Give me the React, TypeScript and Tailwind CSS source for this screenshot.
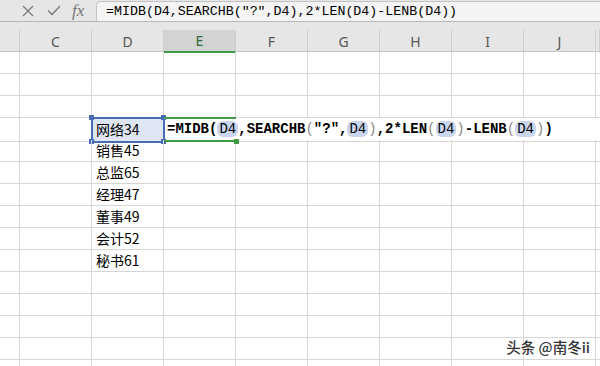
import React from 'react';

const cols = ['B', 'C', 'D', 'E', 'F', 'G', 'H', 'I', 'J', 'K'];

const dValues: Record<number, string> = {
  4: '网络34',
  5: '销售45',
  6: '总监65',
  7: '经理47',
  8: '董事49',
  9: '会计52',
  10: '秘书61',
};

const rowNumbers = Array.from({ length: 15 }, (_, i) => i + 1);

function Ref() {
  return <span className="bg-[#c9d5ee] rounded-[6px] px-[2px] font-normal">D4</span>;
}

function P({ c }: { c: string }) {
  return <span className="text-[#8a8a8a] font-normal">{c}</span>;
}

function Handle({ pos, color }: { pos: string; color: string }) {
  return <div className={`absolute w-[5px] h-[5px] ${pos} ${color}`} />;
}

function CellFormula() {
  return (
    <span className="whitespace-nowrap font-['Liberation_Mono',monospace] font-bold text-[14px] text-black">
      =MIDB(
      <Ref />
      ,SEARCHB<P c="(" />"?",
      <Ref />
      <P c=")" />
      ,2*LEN<P c="(" />
      <Ref />
      <P c=")" />
      -LENB<P c="(" />
      <Ref />
      <P c=")" />)
    </span>
  );
}

export default function App() {
  return (
    <div className="w-[600px] h-[366px] overflow-hidden bg-white relative font-['Noto_Sans','Noto_Sans_CJK_SC',sans-serif]">
      {/* Formula bar */}
      <div className="h-[22px] bg-[#e6e6e6] flex border-b border-[#b8b8b8]">
        <div className="w-[96px] flex items-center">
          <svg className="ml-[22px]" width="12" height="12" viewBox="0 0 12 12">
            <path d="M1 1 L11 11 M11 1 L1 11" stroke="#777" strokeWidth="1.2" fill="none" />
          </svg>
          <svg className="ml-[13px]" width="14" height="11" viewBox="0 0 14 11">
            <path d="M1 5.5 L5 9.5 L13 1" stroke="#777" strokeWidth="1.3" fill="none" />
          </svg>
          <span className="ml-[11px] font-['Liberation_Serif',serif] italic text-[17px] leading-none text-[#777]">fx</span>
        </div>
        <div className="flex-1 mt-[1px] bg-[#f4f4f4] border-l border-t border-[#c2c2c2] rounded-tl-[5px] flex items-center pl-[9px]">
          <span className="whitespace-nowrap font-['Liberation_Mono',monospace] text-[13.3px] text-black">
            =MIDB(D4,SEARCHB("?",D4),2*LEN(D4)-LENB(D4))
          </span>
        </div>
      </div>
      <div className="h-[8px] bg-[#e6e6e6]" />

      {/* Column headers */}
      <div className="grid grid-cols-[20px_repeat(8,72px)_1fr] h-[22px] bg-[#e6e6e6] border-b border-[#c4c4c4]">
        {cols.map((c) => (
          <div
            key={c}
            className={
              c === 'E'
                ? 'flex items-center justify-center border-r border-[#cfcfcf] bg-[#d3d3d3] border-b-2 border-b-[#3f9b45] text-[14px] text-[#2f6a36]'
                : 'flex items-center justify-center border-r border-[#cfcfcf] text-[14px] text-[#555]'
            }
          >
            {c === 'B' || c === 'K' ? '' : c}
          </div>
        ))}
      </div>

      {/* Grid rows */}
      {rowNumbers.map((r) => (
        <div key={r} className="grid grid-cols-[20px_repeat(8,72px)_1fr] h-[22px]">
          {cols.map((c) => {
            const spill = r === 4 && ['E', 'F', 'G', 'H', 'I', 'J'].includes(c);
            const base = `border-b border-[#d6d6d6] ${spill ? '' : 'border-r'} flex items-center relative`;
            if (c === 'D' && r === 4) {
              return (
                <div
                  key={c}
                  className={`${base} bg-[#dfe6f3] pl-[4px] text-[14px] text-black font-['Noto_Sans_CJK_SC',sans-serif] outline-2 outline-[#4a6cb6] -outline-offset-1`}
                >
                  网络34
                  <Handle pos="-top-[3px] -left-[3px]" color="bg-[#4a6cb6]" />
                  <Handle pos="-top-[3px] -right-[3px]" color="bg-[#4a6cb6]" />
                  <Handle pos="-bottom-[3px] -left-[3px]" color="bg-[#4a6cb6]" />
                  <Handle pos="-bottom-[3px] -right-[3px]" color="bg-[#4a6cb6]" />
                </div>
              );
            }
            if (c === 'E' && r === 4) {
              return (
                <div key={c} className="-mt-[1px] border-y-2 border-[#3f9b45] flex items-center relative pl-[3px] z-10">
                  <CellFormula />
                  <Handle pos="-bottom-[4px] -right-[3px]" color="bg-[#3f9b45]" />
                </div>
              );
            }
            return (
              <div key={c} className={`${base} pl-[4px] text-[14px] text-black font-['Noto_Sans_CJK_SC',sans-serif]`}>
                {c === 'D' ? dValues[r] ?? '' : ''}
              </div>
            );
          })}
        </div>
      ))}

      {/* Watermark */}
      <div className="absolute right-[10px] bottom-[9px] text-[14.5px] leading-[20px] font-medium text-[#333] font-['Noto_Sans_CJK_SC',sans-serif] [text-shadow:0_0_2px_#fff,0_0_2px_#fff]">
        头条 @南冬ii
      </div>
    </div>
  );
}
